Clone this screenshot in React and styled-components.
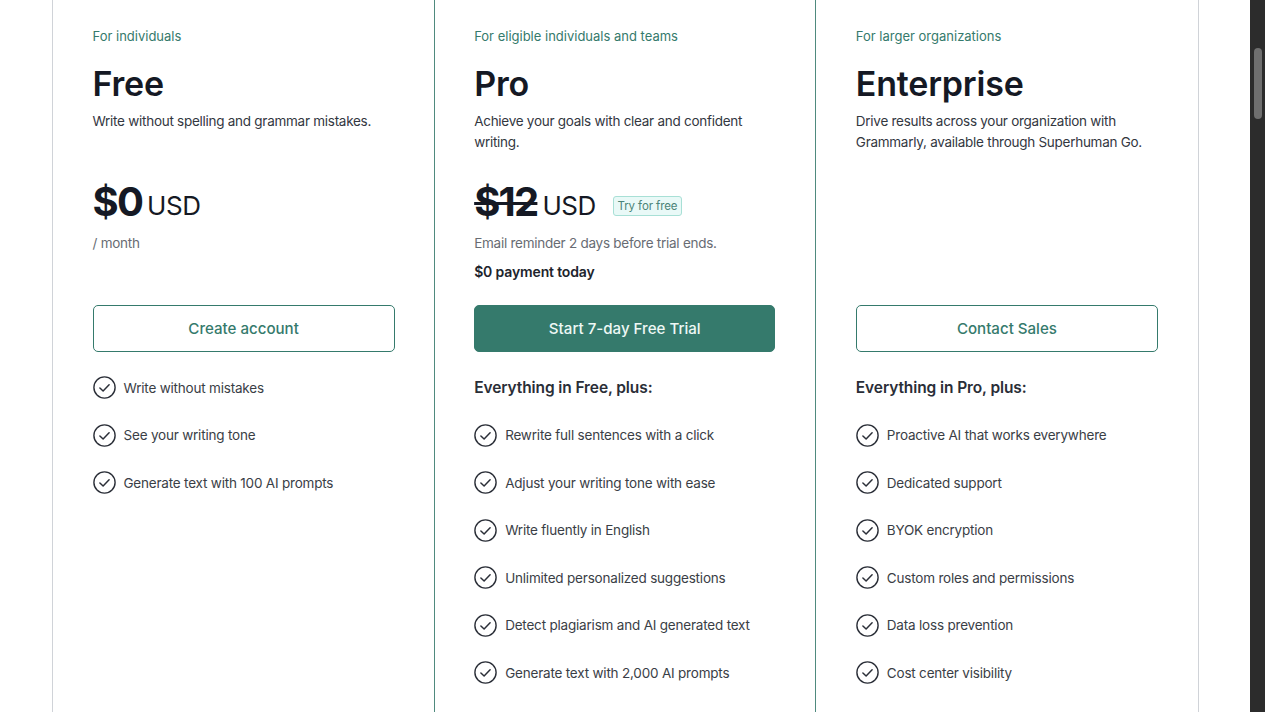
import React from 'react';
import styled, { createGlobalStyle } from 'styled-components';

const GlobalStyle = createGlobalStyle`
    html, body {
        margin: 0;
        padding: 0;
        height: 100%;
        overflow: hidden;
        background: #fff;
    }
    body {
        font-family: Inter, "Noto Sans", "Liberation Sans", sans-serif;
        color: #1f2430;
    }
`;

const Page = styled.div`
    display: flex;
    height: 712px;
    width: 1265px;
    overflow: hidden;
`;

const Main = styled.main`
    flex: 1;
    min-width: 0;
    padding-left: 52px;
    padding-right: 51px;
`;

const Plans = styled.div`
    display: grid;
    grid-template-columns: repeat(3, 1fr);
    height: 712px;
    border-left: 1px solid #d0d3d8;
    border-right: 1px solid #d0d3d8;
    box-sizing: border-box;
`;

const Plan = styled.section`
    box-sizing: border-box;
    min-width: 0;
    padding: 27px 40px 0 39.5px;
    margin-left: ${({ $featured }) => ($featured ? '-1px' : '0')};
    border-left: ${({ $featured }) => ($featured ? '1px solid #4f8a7e' : 'none')};
    border-right: ${({ $featured }) => ($featured ? '1px solid #4f8a7e' : 'none')};
`;

const Audience = styled.div`
    font-size: 13px;
    line-height: 18px;
    color: #357a6c;
`;

const Name = styled.h2`
    margin: 15px 0 0;
    font-size: 34px;
    line-height: 48px;
    font-weight: 600;
    letter-spacing: -0.2px;
    color: #151924;
`;

const Description = styled.p`
    margin: 3px 0 0;
    height: 41px;
    font-size: 13.5px;
    line-height: 21px;
    letter-spacing: -0.27px;
    color: #33373f;
`;

const PriceRow = styled.div`
    display: flex;
    align-items: center;
    height: 48px;
    margin-top: 26px;
`;

const Amount = styled.span`
    font-size: 40px;
    line-height: 48px;
    font-weight: 700;
    letter-spacing: -1.8px;
    color: #151924;
    text-decoration: ${({ $struck }) => ($struck ? 'line-through' : 'none')};
    text-decoration-thickness: 3px;
`;

const Currency = styled.span`
    margin-left: 5px;
    margin-top: 7px;
    font-size: 26px;
    line-height: 32px;
    letter-spacing: -0.4px;
    color: #151924;
`;

const Badge = styled.span`
    box-sizing: border-box;
    margin-left: 17px;
    margin-top: 8px;
    padding: 0 3.5px;
    height: 20px;
    line-height: 18px;
    font-size: 11.5px;
    letter-spacing: -0.1px;
    color: #4b8478;
    background: #e9f9f7;
    border: 1px solid #a8e0d6;
    border-radius: 3px;
`;

const Note = styled.div`
    margin-top: 7px;
    font-size: 13.5px;
    line-height: 21px;
    letter-spacing: -0.26px;
    color: #686c73;
`;

const Today = styled.div`
    margin-top: 7px;
    font-size: 14px;
    line-height: 21px;
    font-weight: 600;
    letter-spacing: -0.15px;
    color: #20242c;
`;

const Actions = styled.div`
    display: flex;
    align-items: flex-end;
    height: 70px;
`;

const Button = styled.button`
    width: 100%;
    height: 47px;
    box-sizing: border-box;
    font-family: inherit;
    font-size: 15.1px;
    font-weight: 500;
    border-radius: 5px;
    border: 1px solid #357a6c;
    color: ${({ $primary }) => ($primary ? '#eef8f5' : '#357a6c')};
    background: ${({ $primary }) => ($primary ? '#357a6c' : '#fff')};
    cursor: pointer;
`;

const FeatureList = styled.ul`
    list-style: none;
    margin: 12px 0 0;
    padding: 0;
`;

const Lead = styled.li`
    display: flex;
    align-items: center;
    height: 47.5px;
    font-size: 15.5px;
    font-weight: 600;
    letter-spacing: -0.1px;
    color: #2a2e37;
`;

const Feature = styled.li`
    display: flex;
    align-items: center;
    gap: 8px;
    height: 47.5px;
    font-size: 13.5px;
    letter-spacing: -0.2px;
    color: #3a3e46;
`;

const Check = styled.svg`
    flex: none;
    width: 23px;
    height: 23px;
`;

const ScrollTrack = styled.div`
    flex: none;
    width: 15px;
    background: #2c2c2c;
    padding-top: 48px;
    box-sizing: border-box;
`;

const ScrollThumb = styled.div`
    width: 8px;
    height: 71px;
    margin-left: 4px;
    border-radius: 4px;
    background: #6f6f6f;
`;

const CheckIcon = () => (
    <Check viewBox="0 0 23 23" fill="none" stroke="#2b2f38" strokeLinecap="round" strokeLinejoin="round">
        <circle cx="11.5" cy="11.5" r="10.6" strokeWidth="1.4" />
        <path d="M6.9 12l3.2 3 6-6.2" strokeWidth="1.5" />
    </Check>
);

const plans = [
    {
        audience: 'For individuals',
        name: 'Free',
        description: 'Write without spelling and grammar mistakes.',
        amount: '$0',
        note: '/ month',
        cta: 'Create account',
        features: ['Write without mistakes', 'See your writing tone', 'Generate text with 100 AI prompts'],
    },
    {
        audience: 'For eligible individuals and teams',
        name: 'Pro',
        description: 'Achieve your goals with clear and confident writing.',
        amount: '$12',
        struck: true,
        badge: 'Try for free',
        note: 'Email reminder 2 days before trial ends.',
        today: '$0 payment today',
        cta: 'Start 7-day Free Trial',
        primary: true,
        featured: true,
        lead: 'Everything in Free, plus:',
        features: [
            'Rewrite full sentences with a click',
            'Adjust your writing tone with ease',
            'Write fluently in English',
            'Unlimited personalized suggestions',
            'Detect plagiarism and AI generated text',
            'Generate text with 2,000 AI prompts',
        ],
    },
    {
        audience: 'For larger organizations',
        name: 'Enterprise',
        description: 'Drive results across your organization with Grammarly, available through Superhuman Go.',
        cta: 'Contact Sales',
        lead: 'Everything in Pro, plus:',
        features: [
            'Proactive AI that works everywhere',
            'Dedicated support',
            'BYOK encryption',
            'Custom roles and permissions',
            'Data loss prevention',
            'Cost center visibility',
        ],
    },
];

function PlanCard({ plan }) {
    return (
        <Plan $featured={plan.featured}>
            <Audience>{plan.audience}</Audience>
            <Name>{plan.name}</Name>
            <Description>{plan.description}</Description>
            <PriceRow>
                {plan.amount && <Amount $struck={plan.struck}>{plan.amount}</Amount>}
                {plan.amount && <Currency>USD</Currency>}
                {plan.badge && <Badge>{plan.badge}</Badge>}
            </PriceRow>
            <Note>{plan.note || '\u00a0'}</Note>
            <Today>{plan.today || '\u00a0'}</Today>
            <Actions>
                <Button $primary={plan.primary}>{plan.cta}</Button>
            </Actions>
            <FeatureList>
                {plan.lead && <Lead>{plan.lead}</Lead>}
                {plan.features.map((feature) => (
                    <Feature key={feature}>
                        <CheckIcon />
                        {feature}
                    </Feature>
                ))}
            </FeatureList>
        </Plan>
    );
}

export default function App() {
    return (
        <Page>
            <GlobalStyle />
            <Main>
                <Plans>
                    {plans.map((plan) => (
                        <PlanCard key={plan.name} plan={plan} />
                    ))}
                </Plans>
            </Main>
            <ScrollTrack>
                <ScrollThumb />
            </ScrollTrack>
        </Page>
    );
}
